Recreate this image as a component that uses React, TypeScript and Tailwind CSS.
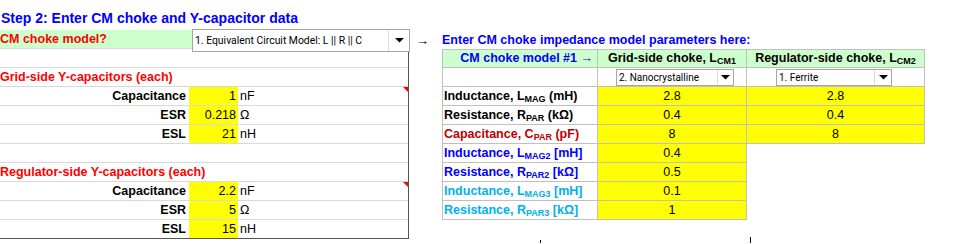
import React from 'react';

const Sub = ({ children }: { children: React.ReactNode }) => (
  <span className="text-[9px] align-[-2px]">{children}</span>
);

function Arrow({ w }: { w: number }) {
  return (
    <svg width={w} height={w / 2} viewBox="0 0 10 5">
      <polygon points="0,0 10,0 5,5" fill="#000" />
    </svg>
  );
}

function Dropdown({ text, className, btn }: { text: string; className: string; btn: string }) {
  return (
    <div className={`flex bg-white border border-[#a6a6a6] font-['Roboto','Liberation_Sans',sans-serif] ${className}`}>
      <div className="flex-1 pl-[2px] whitespace-nowrap overflow-hidden">{text}</div>
      <div className={`flex items-center justify-center border-l border-[#dcdcdc] ${btn}`}>
        <Arrow w={9} />
      </div>
    </div>
  );
}

const capRows = [
  { label: 'Capacitance', value: '1', unit: 'nF', mark: true },
  { label: 'ESR', value: '0.218', unit: 'Ω' },
  { label: 'ESL', value: '21', unit: 'nH' },
];

const regRows = [
  { label: 'Capacitance', value: '2.2', unit: 'nF', mark: true },
  { label: 'ESR', value: '5', unit: 'Ω' },
  { label: 'ESL', value: '15', unit: 'nH' },
];

function ValueRow({ row, last }: { row: { label: string; value: string; unit: string; mark?: boolean }; last?: boolean }) {
  return (
    <div className={`relative flex h-[19px] border-b ${last ? 'border-[#555555]' : 'border-[#d9d9d9]'} leading-[18px]`}>
      <div className="w-[189px] pr-[3px] text-right font-bold">{row.label}</div>
      <div className="w-[49px] bg-[#ffff00] pr-[2px] text-right">{row.value}</div>
      <div className="pl-[2px]">{row.unit}</div>
      {row.mark && (
        <div className="absolute top-0 right-0 w-0 h-0 border-l-[5px] border-l-transparent border-t-[5px] border-t-[#ff0000]" />
      )}
    </div>
  );
}

const params = [
  { label: <>Inductance, L<Sub>MAG</Sub> (mH)</>, color: 'text-black', v2: '2.8', v3: '2.8' },
  { label: <>Resistance, R<Sub>PAR</Sub> (kΩ)</>, color: 'text-black', v2: '0.4', v3: '0.4' },
  { label: <>Capacitance, C<Sub>PAR</Sub> (pF)</>, color: 'text-[#c00000]', v2: '8', v3: '8' },
  { label: <>Inductance, L<Sub>MAG2</Sub> [mH]</>, color: 'text-[#0000ff]', v2: '0.4' },
  { label: <>Resistance, R<Sub>PAR2</Sub> [kΩ]</>, color: 'text-[#0000ff]', v2: '0.5' },
  { label: <>Inductance, L<Sub>MAG3</Sub> [mH]</>, color: 'text-[#00b0f0]', v2: '0.1' },
  { label: <>Resistance, R<Sub>PAR3</Sub> [kΩ]</>, color: 'text-[#00b0f0]', v2: '1' },
];

export default function App() {
  return (
    <div className="flex w-[960px] h-[244px] overflow-hidden bg-white text-black text-[12.5px] font-['Liberation_Sans',Arial,sans-serif]">
      {/* Left: choke model and Y-caps */}
      <div className="w-[409px] shrink-0">
        <div className="h-[30px] pt-[10px] pl-[1px] text-[14px] leading-[17px] font-bold text-[#0000ff] whitespace-nowrap">
          Step 2: Enter CM choke and Y-capacitor data
        </div>
        <div className="relative flex h-[19px] border-b border-[#d9d9d9] leading-[18px]">
          <div className="w-[192px] bg-[#ccffcc] font-bold text-[#ff0000]">CM choke model?</div>
          <Dropdown
            text="1. Equivalent Circuit Model: L || R || C"
            btn="w-[21px]"
            className="absolute left-[192px] right-[-1px] top-[-1px] h-[23px] text-[10.4px] leading-[21px] z-10"
          />
        </div>
        <div className="border-r border-[#555555]">
          <div className="h-[19px] border-b border-[#d9d9d9]" />
          <div className="h-[19px] border-b border-[#d9d9d9] leading-[18px] font-bold text-[#ff0000]">
            Grid-side Y-capacitors (each)
          </div>
          {capRows.map((r) => (
            <ValueRow key={'g' + r.label} row={r} />
          ))}
          <div className="h-[19px] border-b border-[#d9d9d9]" />
          <div className="h-[19px] border-b border-[#d9d9d9] leading-[18px] font-bold text-[#ff0000]">
            Regulator-side Y-capacitors (each)
          </div>
          {regRows.map((r, i) => (
            <ValueRow key={'r' + r.label} row={r} last={i === regRows.length - 1} />
          ))}
        </div>
      </div>

      {/* Right: impedance parameters */}
      <div className="flex flex-col pl-[7px] pt-[30px]">
        <div className="flex h-[19px] items-center leading-[18px] whitespace-nowrap">
          <span className="w-[26px] text-[13px] pt-[3px]">→</span>
          <span className="font-bold text-[#0000ff]">Enter CM choke impedance model parameters here:</span>
        </div>
        <div className="ml-[26px] border-l border-[#c0c0c0] w-[483px]">
          <div className="flex h-[19px] bg-[#ccffcc] border-t border-[#c0c0c0] font-bold leading-[17px] whitespace-nowrap">
            <div className="w-[155px] pr-[4px] text-right text-[#0000ff] border-r border-b border-[#c0c0c0]">CM choke model #1 →</div>
            <div className="w-[149px] text-center border-r border-b border-[#c0c0c0]">
              Grid-side choke, L<Sub>CM1</Sub>
            </div>
            <div className="w-[178px] text-center border-r border-b border-[#c0c0c0]">
              Regulator-side choke, L<Sub>CM2</Sub>
            </div>
          </div>
          <div className="flex h-[19px] text-[10px] leading-[15px]">
            <div className="w-[155px] border-r border-b border-[#c0c0c0]" />
            <div className="w-[149px] border-r border-b border-[#c0c0c0] pt-[1px] pl-[18px]">
              <Dropdown text="2. Nanocrystalline" btn="w-[16px]" className="w-[118px] h-[17px]" />
            </div>
            <div className="w-[178px] border-r border-b border-[#c0c0c0] pt-[1px] pl-[29px]">
              <Dropdown text="1. Ferrite" btn="w-[17px]" className="w-[116px] h-[17px]" />
            </div>
          </div>
          {params.map((p, i) => (
            <div key={i} className="flex h-[19px] leading-[18px] whitespace-nowrap">
              <div className={`w-[155px] pl-[1px] font-bold border-r border-b border-[#c0c0c0] ${p.color}`}>{p.label}</div>
              <div className="w-[149px] text-center bg-[#ffff00] border-r border-b border-[#c0c0c0]">{p.v2}</div>
              {p.v3 && (
                <div className="w-[178px] text-center bg-[#ffff00] border-r border-b border-[#c0c0c0]">{p.v3}</div>
              )}
            </div>
          ))}
        </div>
        <div className="flex items-end h-[6px] mt-[17px] ml-[26px]">
          <div className="ml-[98px] w-px h-[3px] bg-black" />
          <div className="ml-[209px] w-px h-[6px] bg-black" />
        </div>
      </div>
    </div>
  );
}
